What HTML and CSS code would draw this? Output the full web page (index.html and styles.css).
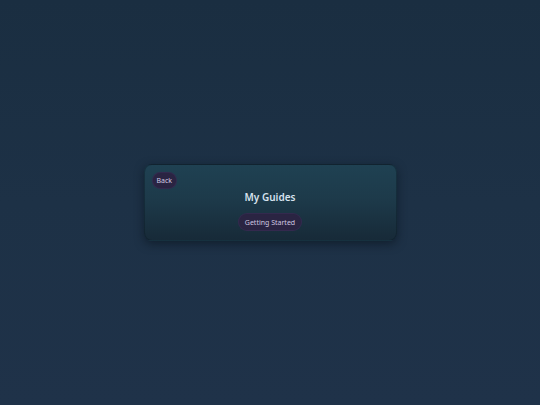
FILE: index.html
```html
<!DOCTYPE html>
<html lang="en">
<head>
<meta charset="utf-8">
<title>My Guides</title>
<link rel="stylesheet" href="styles.css">
</head>
<body>
<main class="stage">
  <section class="card">
    <button class="pill back">Back</button>
    <h1 class="title">My Guides</h1>
    <div class="list">
      <button class="pill guide">Getting Started</button>
    </div>
  </section>
</main>
</body>
</html>
```

FILE: styles.css
```css
html, body {
  margin: 0;
  height: 100%;
}
body {
  background: linear-gradient(180deg, #1a2e41 0%, #1d3146 50%, #1f3249 100%);
  font-family: "Noto Sans", "DejaVu Sans", sans-serif;
}
.stage {
  height: 100%;
  display: flex;
  align-items: center;
  justify-content: center;
}
.card {
  width: 253px;
  box-sizing: border-box;
  padding: 7px 7px 9px;
  border-radius: 8px;
  background: linear-gradient(180deg, #1f4152 0%, #1d3a4a 45%, #172a38 100%);
  box-shadow: 0 3px 10px rgba(8, 16, 26, 0.55);
  border: 1px solid rgba(10, 25, 35, 0.4);
  display: flex;
  flex-direction: column;
  align-items: center;
}
.pill {
  font-family: inherit;
  border: 1px solid rgba(60, 45, 90, 0.5);
  background: #2a2442;
  color: #cfc7e0;
  border-radius: 999px;
  font-size: 7px;
  line-height: 9px;
  padding: 4px 6px;
  cursor: pointer;
}
.back {
  align-self: flex-start;
  height: 17px;
  padding: 0 4px;
}
.title {
  margin: 1px 0 1px;
  font-size: 10px;
  line-height: 14px;
  font-weight: 600;
  color: #d6e2ee;
}
.list {
  margin-top: 8px;
  display: flex;
  justify-content: center;
}
.guide {
  height: 18px;
  padding: 0 6px;
}
```
